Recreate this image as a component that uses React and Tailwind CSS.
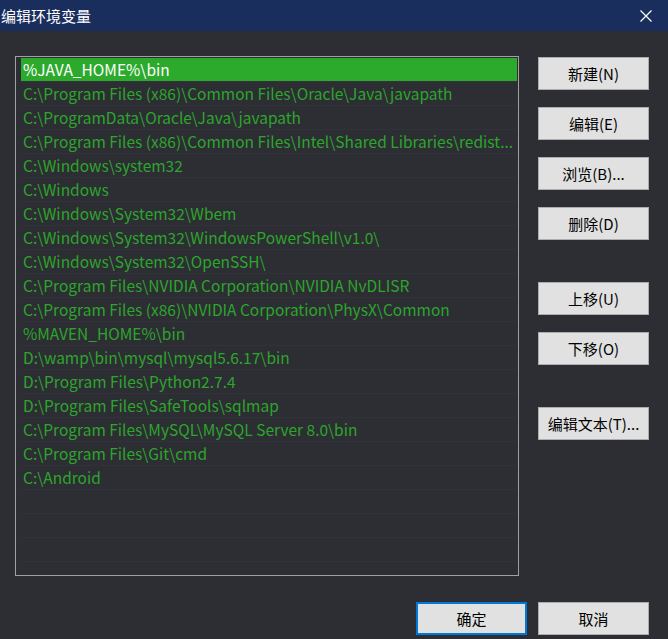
import React from 'react';

const paths = [
  '%JAVA_HOME%\\bin',
  'C:\\Program Files (x86)\\Common Files\\Oracle\\Java\\javapath',
  'C:\\ProgramData\\Oracle\\Java\\javapath',
  'C:\\Program Files (x86)\\Common Files\\Intel\\Shared Libraries\\redist...',
  'C:\\Windows\\system32',
  'C:\\Windows',
  'C:\\Windows\\System32\\Wbem',
  'C:\\Windows\\System32\\WindowsPowerShell\\v1.0\\',
  'C:\\Windows\\System32\\OpenSSH\\',
  'C:\\Program Files\\NVIDIA Corporation\\NVIDIA NvDLISR',
  'C:\\Program Files (x86)\\NVIDIA Corporation\\PhysX\\Common',
  '%MAVEN_HOME%\\bin',
  'D:\\wamp\\bin\\mysql\\mysql5.6.17\\bin',
  'D:\\Program Files\\Python2.7.4',
  'D:\\Program Files\\SafeTools\\sqlmap',
  'C:\\Program Files\\MySQL\\MySQL Server 8.0\\bin',
  'C:\\Program Files\\Git\\cmd',
  'C:\\Android',
];

const font = "font-['Noto_Sans_CJK_SC',sans-serif]";

const Btn = ({ children, primary, className = '' }) => (
  <button
    className={`h-[33px] w-[111px] bg-[#e1e1e1] text-[15px] leading-none text-black ${
      primary ? 'border-2 border-[#0078d7]' : 'border border-[#adadad]'
    } ${className}`}
  >
    {children}
  </button>
);

export default function App() {
  const rows = [...paths, '', '', '', '', ''];

  return (
    <div className={`flex h-[639px] w-[668px] flex-col overflow-hidden bg-[#2d2e33] ${font}`}>
      {/* title bar */}
      <div className="flex h-[31px] items-center justify-between bg-[#1a2e5e] pl-[1px] pr-[16px]">
        <span className="text-[15px] leading-none text-white">编辑环境变量</span>
        <svg width="12" height="12" viewBox="0 0 12 12" stroke="white" strokeWidth="1.2">
          <path d="M0.5 0.5L11.5 11.5M11.5 0.5L0.5 11.5" />
        </svg>
      </div>

      <div className="flex gap-[19px] pl-[15px] pt-[25px]">
        {/* path list */}
        <div className="h-[520px] w-[504px] overflow-hidden border border-[#a0a0a0] pl-[5px] pr-[1px] pt-[1px]">
          {rows.map((p, i) => (
            <div
              key={i}
              className={`flex h-[24px] items-center whitespace-nowrap border-b border-[#323338] pl-[2px] text-[15.5px] leading-none ${
                i === 0 ? 'border-[#2caa2c] bg-[#2caa2c] text-white' : 'text-[#2ca52c]'
              }`}
            >
              {p}
            </div>
          ))}
        </div>

        {/* side buttons */}
        <div className="flex flex-col pt-[1px]">
          <div className="flex flex-col gap-[17px]">
            <Btn>新建(N)</Btn>
            <Btn>编辑(E)</Btn>
            <Btn>浏览(B)...</Btn>
            <Btn>删除(D)</Btn>
          </div>
          <div className="mt-[42px] flex flex-col gap-[17px]">
            <Btn>上移(U)</Btn>
            <Btn>下移(O)</Btn>
          </div>
          <Btn className="mt-[42px]">编辑文本(T)...</Btn>
        </div>
      </div>

      {/* bottom buttons */}
      <div className="mt-[26px] flex justify-end gap-[11px] pr-[19px]">
        <Btn primary>确定</Btn>
        <Btn>取消</Btn>
      </div>
    </div>
  );
}
